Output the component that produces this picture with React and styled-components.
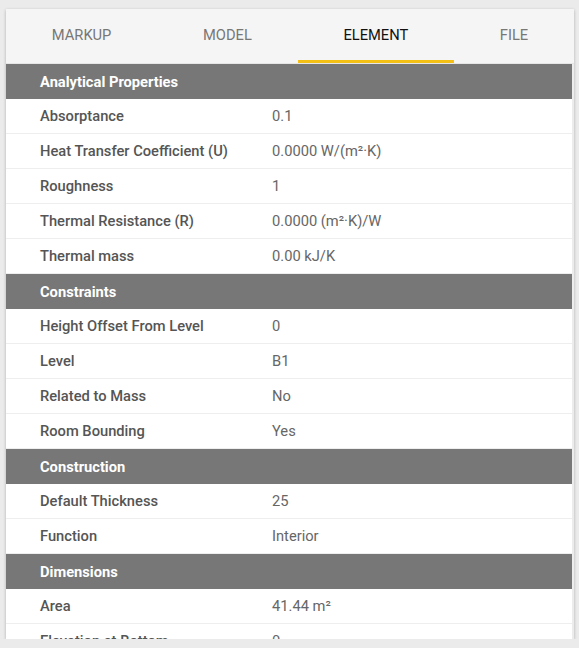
import React from "react";
import styled, { createGlobalStyle } from "styled-components";

const Global = createGlobalStyle`
  html, body {
    margin: 0;
    background: #ebebeb;
    font-family: Roboto, "Liberation Sans", sans-serif;
  }
  body {
    padding: 9px 5px 0 6px;
  }
`;

const Panel = styled.div`
  width: 568px;
  height: 630px;
  background: #fff;
  box-shadow: 0 1px 3px rgba(0, 0, 0, 0.25);
  display: flex;
  flex-direction: column;
  overflow: hidden;
`;

const Tabs = styled.div`
  display: flex;
  height: 54px;
  background: #f5f5f5;
  border-bottom: 1px solid #e6e6e6;
  flex-shrink: 0;
`;

const Tab = styled.div`
  flex: 1 1 auto;
  display: flex;
  align-items: center;
  justify-content: center;
  padding-bottom: 3px;
  font-size: 14.7px;
  text-transform: uppercase;
  color: ${(p) => (p.$active ? "#111" : "#777")};
  box-shadow: ${(p) => (p.$active ? "inset 0 -3px 0 #f5c016" : "none")};
`;

const Scroll = styled.div`
  flex: 1;
  overflow: hidden;
  padding-right: 2px;
  background: #ececec;
`;

const List = styled.div`
  background: #fff;
`;

const Header = styled.div`
  height: 35px;
  background: #777;
  color: #fff;
  font-size: 14.7px;
  font-weight: 700;
  display: flex;
  align-items: center;
  padding-left: 34px;
`;

const Row = styled.div`
  height: 34px;
  border-bottom: 1px solid #eee;
  display: grid;
  grid-template-columns: 232px 1fr;
  align-items: center;
  padding-left: 34px;
  font-size: 14.7px;
`;

const Label = styled.div`
  color: #555;
  font-weight: 500;
`;

const Value = styled.div`
  color: #666;
`;

const sections = [
  {
    title: "Analytical Properties",
    rows: [
      ["Absorptance", "0.1"],
      ["Heat Transfer Coefficient (U)", "0.0000 W/(m²·K)"],
      ["Roughness", "1"],
      ["Thermal Resistance (R)", "0.0000 (m²·K)/W"],
      ["Thermal mass", "0.00 kJ/K"],
    ],
  },
  {
    title: "Constraints",
    rows: [
      ["Height Offset From Level", "0"],
      ["Level", "B1"],
      ["Related to Mass", "No"],
      ["Room Bounding", "Yes"],
    ],
  },
  {
    title: "Construction",
    rows: [
      ["Default Thickness", "25"],
      ["Function", "Interior"],
    ],
  },
  {
    title: "Dimensions",
    rows: [
      ["Area", "41.44 m²"],
      ["Elevation at Bottom", "0"],
      ["Elevation at Top", "25"],
    ],
  },
];

const tabs = ["Markup", "Model", "Element", "File"];

export default function App() {
  return (
    <>
      <Global />
      <Panel>
        <Tabs>
          {tabs.map((t) => (
            <Tab key={t} $active={t === "Element"}>
              {t}
            </Tab>
          ))}
        </Tabs>
        <Scroll>
          <List>
            {sections.map((s) => (
              <React.Fragment key={s.title}>
                <Header>{s.title}</Header>
                {s.rows.map(([k, v]) => (
                  <Row key={k}>
                    <Label>{k}</Label>
                    <Value>{v}</Value>
                  </Row>
                ))}
              </React.Fragment>
            ))}
          </List>
        </Scroll>
      </Panel>
    </>
  );
}
